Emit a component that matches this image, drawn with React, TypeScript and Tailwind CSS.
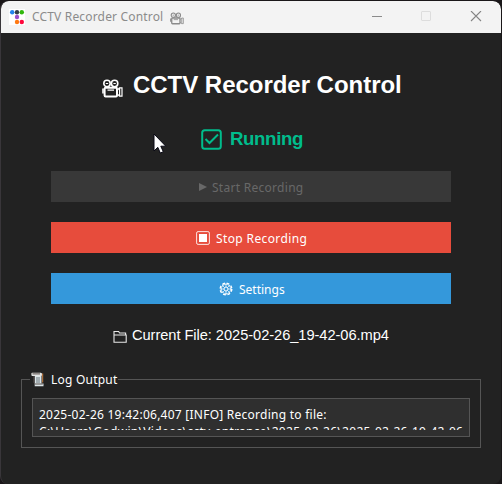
import React from "react";

function Camera({ className, body, hole }: { className: string; body: string; hole: string }) {
  return (
    <svg className={className} viewBox="0 0 21 19" fill="none" stroke={body} strokeWidth="1.6">
      <circle cx="5" cy="4.5" r="3.2" />
      <circle cx="12.6" cy="4.5" r="3.2" />
      <path d="M3.8 4.5h2.4M11.4 4.5h2.4" strokeWidth="1.2" />
      <rect x="2.6" y="8.8" width="12.4" height="8.6" rx="1" fill={hole} strokeWidth="2" />
      <path d="M5.5 11.2h6.5" strokeWidth="1.2" />
      <path d="M1 9.5v5" />
      <path d="M15.5 11l2-2.2h2.5v8.4h-2.5l-2-2M17.6 9v8" strokeWidth="1.2" />
    </svg>
  );
}

function TitleBar() {
  return (
    <header className="flex h-8 shrink-0 items-center rounded-t-lg bg-[#f3f3f3] pl-[8px] text-[#8b8b8b]">
      <svg className="size-4 shrink-0" viewBox="0 0 16 16">
        <rect width="16" height="16" fill="#fff" />
        <circle cx="3.2" cy="3.2" r="2.2" fill="#2383ec" />
        <circle cx="8" cy="3.2" r="2.2" fill="#343e48" />
        <circle cx="12.8" cy="3.2" r="2.2" fill="#32b80d" />
        <circle cx="8" cy="8" r="2.2" fill="#9b4dca" />
        <circle cx="8" cy="13" r="2.2" fill="#ff7911" />
        <circle cx="12.8" cy="13" r="2.2" fill="#ff073c" />
      </svg>
      <span className="ml-[7px] w-[138px] whitespace-nowrap font-['Noto_Sans',sans-serif] text-[12px] tracking-[0.17px]">CCTV Recorder Control</span>
      <Camera className="mt-0.5 h-[13px] w-[14px]" body="#8b8b8b" hole="#f3f3f3" />
      <svg className="ml-auto mr-[19px] h-3 w-[111px]" viewBox="0 0 111 12" fill="none">
        <path d="M1 5.5h10" stroke="#8b8b8b" />
        <rect x="50.5" y="0.5" width="9" height="9" rx="0.5" stroke="#dddddd" />
        <path d="M100 0l10 10M110 0l-10 10" stroke="#858585" strokeWidth="1.1" />
      </svg>
    </header>
  );
}

export default function App() {
  return (
    <div className="h-[484px] w-[502px] overflow-hidden bg-[#1a1719] pr-px pt-px">
      <div className="relative flex h-[483px] flex-col overflow-hidden rounded-lg border-l border-[#39363a] bg-[#222222]">
        <TitleBar />
        <main className="flex flex-col font-['Liberation_Sans',Arial,sans-serif] text-white">
          <h1 className="mt-[36px] flex h-8 items-center pl-[101px] text-[24px] font-bold leading-8">
            <Camera className="mt-[7px] h-[19px] w-[21px]" body="#ffffff" hole="#222222" />
            <span className="ml-[10px] whitespace-nowrap tracking-[-0.03px]">CCTV Recorder Control</span>
          </h1>

          <div className="mt-[24px] flex h-7 items-center pl-[200px] text-[18.67px] font-bold text-[#00bc8c]">
            <svg className="size-[21px]" viewBox="0 0 21 21" fill="none" stroke="#00bc8c" strokeWidth="2">
              <rect x="1.2" y="1.2" width="18.6" height="18.6" rx="2.5" />
              <path d="M4.5 10l4 4 8.5-8.5" />
            </svg>
            <span className="ml-[8px] tracking-[-0.38px]">Running</span>
          </div>

          <div className="ml-[50px] mt-[18px] flex w-[400px] flex-col gap-5 font-['Noto_Sans',sans-serif] text-[12px]">
            <button disabled className="flex h-[31px] items-center bg-[#383838] pl-[148px] text-[#686868]">
              <svg className="mt-px h-[8px] w-[8px]" viewBox="0 0 8 8"><path d="M0 0l8 4-8 4z" fill="#686868" /></svg>
              <span className="ml-[5px] mt-[2px] whitespace-nowrap tracking-[0.28px]">Start Recording</span>
            </button>
            <button className="flex h-[31px] items-center bg-[#e74c3c] pl-[145px]">
              <svg className="mt-px size-[14px]" viewBox="0 0 14 14">
                <rect x="0.6" y="0.6" width="12.8" height="12.8" rx="1.5" fill="none" stroke="#fff" strokeOpacity=".85" />
                <path d="M3 3h8v8H3z" fill="#fff" />
              </svg>
              <span className="ml-[6px] mt-[2px] whitespace-nowrap tracking-[0.38px]">Stop Recording</span>
            </button>
            <button className="flex h-[31px] items-center bg-[#3498db] pl-[168px]">
              <svg className="mt-px size-[14px]" viewBox="0 0 14 14" fill="none" stroke="#fff">
                <circle cx="7" cy="7" r="5.8" strokeWidth="1.4" strokeDasharray="2.8 1.755" />
                <circle cx="7" cy="7" r="4.7" strokeWidth=".7" />
                <circle cx="7" cy="7" r="2" />
                <path d="M7 1v4M7 9v4M1 7h4M9 7h4M3 3l2.5 2.5M8.5 8.5L11 11M11 3L8.5 5.5M5.5 8.5L3 11" strokeWidth=".7" />
              </svg>
              <span className="ml-[6px] mt-[2px]">Settings</span>
            </button>
          </div>

          <div className="mt-[20px] flex h-[22px] items-center pl-[112px] text-[14.67px]">
            <svg className="mt-[2px] h-[13px] w-[14px]" viewBox="0 0 14 13" fill="none" stroke="#e8e8e8" strokeWidth="1.1">
              <path d="M1 12V1.5h4.6l1 1.5H12.6V5M1 12.2V5H13.2v7.2z" />
            </svg>
            <span className="ml-[5px] whitespace-nowrap tracking-[-0.06px]">Current File: 2025-02-26_19-42-06.mp4</span>
          </div>

          <fieldset className="ml-[20px] mt-[25px] h-[77px] w-[460px] border border-[#555555] font-['Noto_Sans',sans-serif] text-[12px]">
            <legend className="ml-[8px] flex h-[17px] items-center leading-[17px]">
              <svg className="h-[15px] w-[15px]" viewBox="0 0 14 15">
                <path d="M2.5 1h8.5v10.5H13v2.7H4.2V4H1z" fill="#dce5e8" />
                <path d="M1.7.8h8.8q1.5.5.8 3H3q-2.3.1-2.2-1.6Q.8.8 1.7.8" fill="#e5e5e3" />
                <path d="M2 1.9h7.5M3.4 4v6.8M4.3 12h8" stroke="#554c49" />
                <path d="M5.5 6h4M5.5 8h4M5.5 10h4" stroke="#68747b" />
                <path d="M12.2 1.5v9" stroke="#ca8040" />
              </svg>
              <span className="ml-[6px] whitespace-nowrap tracking-[0.22px]">Log Output</span>
            </legend>
            <div className="ml-[10px] mt-[10px] h-[39px] w-[438px] border border-[#555555] bg-[#2f2f2f] pl-[6px] pt-[7px]">
              <div className="h-[24px] overflow-hidden whitespace-nowrap leading-[17px]">
                <p className="tracking-[0.25px]">2025-02-26 19:42:06,407 [INFO] Recording to file:</p>
                <p className="tracking-[0.3px]">C:\Users\Godwin\Videos\cctv-entrance\2025-02-26\2025-02-26-19-42-06</p>
              </div>
            </div>
          </fieldset>
        </main>
        <svg className="absolute left-[152px] top-[132px] h-[21px] w-[14px]" viewBox="0 0 14 21">
          <path d="M1 1v17l3.8-3.7L7.3 20l3-1.3-2.5-5.5h5z" fill="#fff" stroke="#080814" />
        </svg>
      </div>
    </div>
  );
}
